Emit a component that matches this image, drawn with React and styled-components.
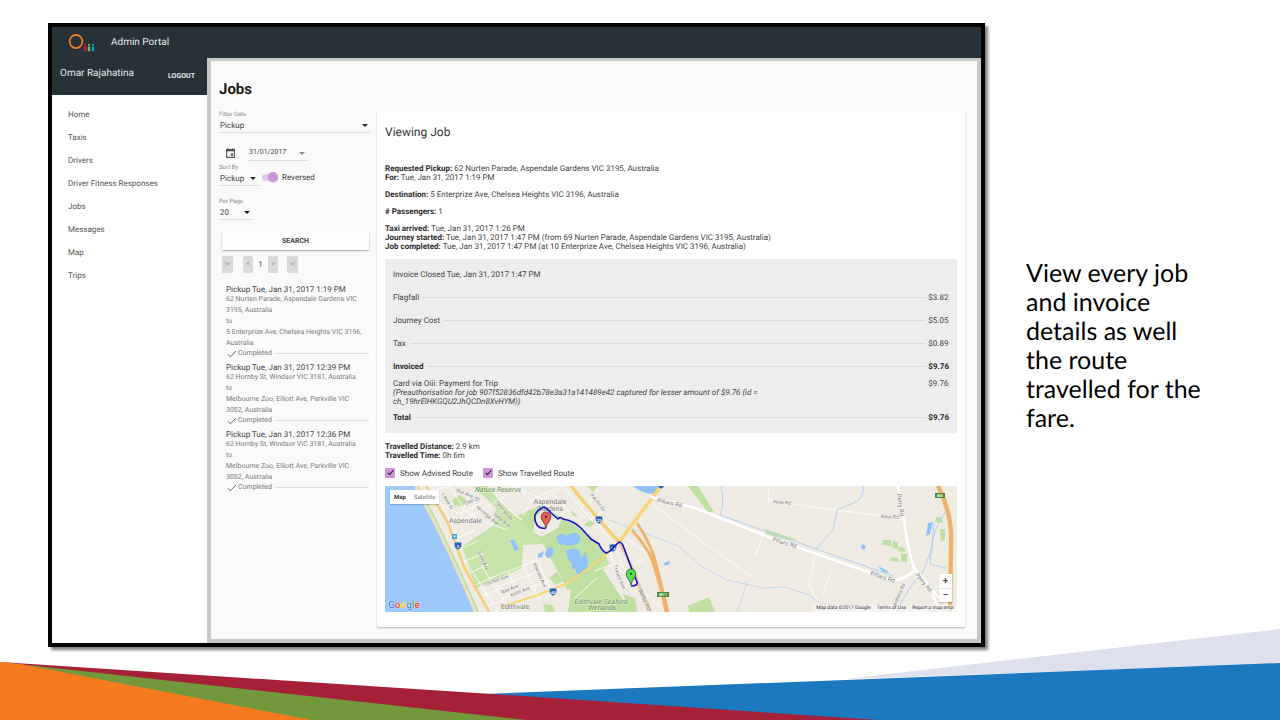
import React from "react";
import styled, { createGlobalStyle, css } from "styled-components";

const GlobalStyle = createGlobalStyle`
  *, *::before, *::after { box-sizing: border-box; }
  body {
    margin: 0;
    background: #fff;
    font-family: Roboto, "Liberation Sans", sans-serif;
    font-size: 8px;
    line-height: 9px;
    color: #444;
    text-rendering: geometricPrecision;
  }
  button, input, select { font: inherit; color: inherit; text-rendering: inherit; margin: 0; padding: 0; border: 0; background: none; }
  p, h1, h2, ul, ol { margin: 0; padding: 0; }
  ul, ol { list-style: none; }
  a { color: inherit; text-decoration: none; }
`;

const Slide = styled.div`
  position: relative;
  min-height: 100vh;
  padding: 23px 64px 73px 48px;
  display: grid;
  grid-template-columns: minmax(0, 1fr) 190px;
  column-gap: 41px;
  overflow: hidden;
`;

const Swoosh = styled.svg`
  position: absolute;
  left: 0;
  bottom: 0;
  width: 100%;
  height: 92px;
`;

const Caption = styled.p`
  align-self: center;
  padding-top: 22px;
  font-family: Lato, "Open Sans", sans-serif;
  font-size: 25px;
  line-height: 29px;
  color: #000;
`;

const Portal = styled.div`
  position: relative;
  z-index: 1;
  border: 4px solid #000;
  background: #fff;
  box-shadow: 3px 3px 3px rgba(0, 0, 0, 0.5);
  display: flex;
  flex-direction: column;
`;

const TopBar = styled.header`
  height: 31px;
  padding-left: 16px;
  display: flex;
  align-items: center;
  gap: 16px;
  background: #263238;
  color: #e4e8ea;
  font-size: 10px;
  line-height: 12px;
`;

const Body = styled.div`
  flex: 1;
  display: grid;
  grid-template-columns: 155px minmax(0, 1fr);
`;

const UserBar = styled.div`
  height: 37px;
  padding: 0 12px 6px 8px;
  display: flex;
  align-items: center;
  justify-content: space-between;
  background: #263238;
  color: #e4e8ea;
  font-size: 10px;
  line-height: 12px;
`;

const Logout = styled.button`
  padding-top: 6px;
  font-size: 7px;
  line-height: 9px;
  font-weight: 700;
`;

const NavList = styled.ul`
  padding: 8px 16px;
`;

const NavLink = styled.a`
  display: block;
  line-height: 23px;
  color: #555;
`;

const Main = styled.main`
  border: solid #c8c8c8;
  border-width: 3px 4px 4px;
  background: #fafafa;
  padding: 20px 12px 12px 8px;
`;

const PageTitle = styled.h1`
  font-size: 15px;
  line-height: 16px;
  font-weight: 700;
  color: #1c1c1c;
`;

const Columns = styled.div`
  margin-top: 15px;
  display: grid;
  grid-template-columns: 152px minmax(0, 1fr);
  column-gap: 6px;
`;

const Field = styled.div`
  position: relative;
  width: ${(p) => p.$width};
`;

const FieldLabel = styled.label`
  display: block;
  font-size: 6px;
  line-height: 6px;
  color: #888;
`;

const underline = css`
  border-bottom: 1px solid #dcdcdc;
`;

const Select = styled.select`
  appearance: none;
  display: block;
  width: 100%;
  height: 15px;
  padding: 1px 1px 0;
  ${underline}
`;

const Arrow = styled.span`
  position: absolute;
  right: 3px;
  bottom: 6px;
  border: 3px solid transparent;
  border-top-color: ${(p) => (p.$muted ? "#888" : "#222")};
  border-bottom: 0;
  pointer-events: none;
`;

const DateRow = styled.div`
  margin-top: 11px;
  padding-left: 6px;
  display: flex;
  align-items: center;
  gap: 11px;
`;

const IconButton = styled.button`
  display: block;
  width: 11px;
  height: 12px;
  svg { display: block; }
`;

const DateInput = styled.input`
  display: block;
  width: 100%;
  height: 17px;
  padding: 0 2px;
  font-size: 7px;
  ${underline}
`;

const SortRow = styled.div`
  margin-top: 4px;
  display: flex;
  align-items: center;
  gap: 3px;
`;

const ToggleLabel = styled.label`
  padding-top: 3px;
  display: flex;
  align-items: center;
  gap: 4px;
`;

const Switch = styled.input`
  appearance: none;
  position: relative;
  width: 16px;
  height: 7px;
  border-radius: 4px;
  background: #e6c8ea;
  &::before {
    content: "";
    position: absolute;
    right: 0;
    top: -2px;
    width: 10px;
    height: 10px;
    border-radius: 5px;
    background: #ce93d8;
    box-shadow: 0 1px 1px rgba(0, 0, 0, 0.15);
  }
`;

const PerPage = styled.div`
  margin-top: 13px;
`;

const SearchButton = styled.button`
  display: block;
  width: 147px;
  height: 18px;
  margin: 12px 0 6px 3px;
  border-radius: 1px;
  background: #fcfcfc;
  box-shadow: 0 1px 2px rgba(0, 0, 0, 0.35);
  font-size: 7px;
  font-weight: 700;
`;

const Pager = styled.nav`
  margin-left: 3px;
  display: flex;
  align-items: center;
`;

const PagerButton = styled.button`
  width: 11px;
  height: 17px;
  border-radius: 1px;
  background: #dadada;
  color: #888;
  font-size: 7px;
  text-align: center;
  &:nth-of-type(2), &:nth-of-type(3) { width: 10px; }
  &:nth-of-type(1) { margin-right: 10px; }
  &:nth-of-type(4) { margin-left: 9px; }
`;

const PagerCurrent = styled.span`
  width: 15px;
  text-align: center;
`;

const JobList = styled.ol`
  margin: 12px 2px 0 7px;
  display: grid;
  gap: 5px;
`;

const JobTitle = styled.a`
  display: block;
`;

const JobAddress = styled.p`
  padding-right: 5px;
  font-size: 7px;
  line-height: 11px;
  color: #7a7a7a;
`;

const JobStatus = styled.div`
  padding-left: 1px;
  display: flex;
  align-items: center;
  gap: 1px;
  font-size: 7px;
  color: #777;
  &::after {
    content: "";
    flex: 1;
    height: 1px;
    margin-left: 2px;
    background: #ddd;
  }
`;

const Card = styled.section`
  background: #fff;
  border-radius: 1px;
  box-shadow: 0 1px 2px rgba(0, 0, 0, 0.28);
  padding: 12px 8px 15px;
`;

const CardTitle = styled.h2`
  margin-bottom: 24px;
  font-size: 12px;
  line-height: 16px;
  font-weight: 400;
  color: #333;
`;

const Para = styled.p`
  margin-bottom: 8px;
  b { color: #2c2c2c; }
`;

const InvoiceBox = styled.div`
  padding: 4px 8px;
  margin-bottom: 9px;
  background: #ededed;
`;

const InvoiceHead = styled.p`
  line-height: 23px;
`;

const InvoiceTable = styled.table`
  width: 100%;
  border-collapse: collapse;
  th, td { padding: 0; text-align: left; font-weight: inherit; }
`;

const Row = styled.tr`
  height: 23px;
  ${(p) => p.$strong && css`font-weight: 700; color: #2c2c2c;`}
`;

const Leader = styled.div`
  display: flex;
  align-items: center;
  gap: 4px;
  &::after {
    content: "";
    flex: 1;
    height: 1px;
    margin-right: 2px;
    background: #dadada;
  }
`;

const Amount = styled.td`
  width: 20px;
`;

const PaymentRow = styled.tr`
  height: 28px;
  vertical-align: bottom;
  td:last-child { vertical-align: top; padding-top: 1px; }
`;

const PaymentNote = styled.div`
  max-width: 380px;
`;

const RouteOptions = styled.div`
  display: flex;
  gap: 10px;
  margin-bottom: 8px;
`;

const CheckLabel = styled.label`
  display: flex;
  align-items: center;
  gap: 5px;
`;

const Checkbox = styled.input`
  appearance: none;
  position: relative;
  width: 10px;
  height: 10px;
  background: #ce93d8;
  border-radius: 1px;
  &::before {
    content: "";
    position: absolute;
    left: 4px;
    top: 1px;
    width: 3px;
    height: 6px;
    border: solid #222;
    border-width: 0 1px 1px 0;
    transform: rotate(42deg);
  }
`;

const MapFrame = styled.div`
  position: relative;
  height: 126px;
  overflow: hidden;
  background: #efebe2;
`;

const MapArt = styled.svg`
  display: block;
  width: 100%;
  height: 100%;
  font-family: Roboto, sans-serif;
`;

const MapTypes = styled.div`
  position: absolute;
  left: 5px;
  top: 4px;
  display: flex;
  height: 14px;
  background: #fff;
  box-shadow: 0 1px 1px rgba(0, 0, 0, 0.2);
`;

const MapType = styled.button`
  padding: 0 4px;
  font-size: 6px;
  color: ${(p) => (p.$active ? "#111" : "#777")};
  font-weight: ${(p) => (p.$active ? 500 : 400)};
`;

const ZoomControls = styled.div`
  position: absolute;
  right: 5px;
  bottom: 10px;
  width: 13px;
  display: grid;
  background: #fff;
  box-shadow: 0 1px 1px rgba(0, 0, 0, 0.2);
`;

const ZoomButton = styled.button`
  height: 14px;
  font-size: 10px;
  font-weight: 700;
  color: #555;
  & + & { border-top: 1px solid #e6e6e6; }
`;

const Credits = styled.div`
  position: absolute;
  right: 0;
  bottom: 0;
  padding: 0 3px;
  display: flex;
  gap: 6px;
  background: rgba(245, 245, 245, 0.75);
  font-size: 5px;
  line-height: 7px;
  color: #333;
`;

const GoogleMark = styled.a`
  position: absolute;
  left: 3px;
  bottom: 0;
  font-size: 10px;
  line-height: 12px;
  font-weight: 500;
  text-shadow: 0 0 1px #fff, 0 0 1px #fff;
`;

const Letter = styled.span`
  color: ${(p) => p.$color};
`;

const NAV = ["Home", "Taxis", "Drivers", "Driver Fitness Responses", "Jobs", "Messages", "Map", "Trips"];

const ZOO = "Melbourne Zoo, Elliott Ave, Parkville VIC 3052, Australia";
const HORNBY = "62 Hornby St, Windsor VIC 3181, Australia";
const JOBS = [
  {
    title: "Pickup Tue, Jan 31, 2017 1:19 PM",
    from: "62 Nurten Parade, Aspendale Gardens VIC 3195, Australia",
    to: "5 Enterprize Ave, Chelsea Heights VIC 3196, Australia",
  },
  { title: "Pickup Tue, Jan 31, 2017 12:39 PM", from: HORNBY, to: ZOO },
  { title: "Pickup Tue, Jan 31, 2017 12:36 PM", from: HORNBY, to: ZOO },
];

const CHARGES = [
  { name: "Flagfall", amount: "$3.82" },
  { name: "Journey Cost", amount: "$5.05" },
  { name: "Tax", amount: "$0.89" },
  { name: "Invoiced", amount: "$9.76", strong: true },
];

const GOOGLE = [["G", "#4285f4"], ["o", "#ea4335"], ["o", "#fbbc05"], ["g", "#4285f4"], ["l", "#34a853"], ["e", "#ea4335"]];

function Logo() {
  return (
    <svg width="27" height="20" viewBox="0 0 27 20" role="img" aria-label="Oiii">
      <ellipse cx="8" cy="8.5" rx="6.4" ry="6.6" fill="none" stroke="#f5821f" strokeWidth="1.7" />
      {[["#d4145a", 17], ["#7ac143", 21], ["#1c8fd6", 25]].map(([c, x]) => (
        <g key={x} fill={c}>
          <circle cx={x} cy="11.8" r="1.1" />
          <path d={`M${x - 1.2} 13.6h2.4v4.6h-2.4z`} />
        </g>
      ))}
    </svg>
  );
}

function CalendarIcon() {
  return (
    <svg width="11" height="12" viewBox="0 0 11 12" fill="none" stroke="#555" aria-hidden="true">
      <path d="M1.6 2.5h7.8v7.9H1.6z" strokeWidth="1.1" />
      <path d="M1.2 3.3h8.6" strokeWidth="2" />
      <path d="M3 1v2M8 1v2" strokeWidth="1" />
      <path d="M5.8 6.4h2.3v2.3H5.8z" fill="#555" stroke="none" />
    </svg>
  );
}

function TickIcon() {
  return (
    <svg width="10" height="9" viewBox="0 0 10 9" fill="none" stroke="#666" aria-hidden="true">
      <path d="M1 5.3l2.4 2.5L9 2" strokeWidth="1" />
    </svg>
  );
}

function SelectField({ id, label, value, width }) {
  return (
    <Field $width={width}>
      <FieldLabel htmlFor={id}>{label}</FieldLabel>
      <Select id={id} defaultValue={value}>
        <option>{value}</option>
      </Select>
      <Arrow />
    </Field>
  );
}

function Shield({ x, y, text }) {
  return (
    <g transform={`translate(${x} ${y})`}>
      <path d="M-3.6-3.4Q0-4.6 3.6-3.4Q4.4 2.4 0 4Q-4.4 2.4-3.6-3.4z" fill="#2a62ad" stroke="#fff" strokeWidth=".4" />
      {text && <text y="1.6" fontSize="4" fontWeight="700" fill="#fff" textAnchor="middle">{text}</text>}
    </g>
  );
}

function Pin({ x, y, color }) {
  return (
    <g transform={`translate(${x} ${y})`}>
      <path d="M0 0C-.8-5-4.8-7-4.8-11.3a4.8 4.8 0 019.6 0C4.8-7 .8-5 0 0z" fill={color} stroke="#222" strokeWidth=".6" />
      <circle cy="-11.3" r="1" fill="#111" />
    </g>
  );
}

const LABELS = [
  ["Laura St", 57, 8, 62, 5], ["dus Ave", 71, 5, 24, 5], ["Glen St", 80, 19, -20, 5],
  ["Nirringa Ave", 91, 22, 40, 5], ["Iluka Ave", 108, 29, 38, 5], ["Tarongo Dr", 110, 16, 50, 5],
  ["Sixth Ave", 92, 66, 64, 5], ["Lochiel Ave", 100, 100, -19, 5], ["Rae Ave", 117, 108, -22, 5],
  ["Keith Ave", 126, 111, -22, 5], ["Kinross Ave", 148, 78, 66, 5], ["Pacific Dr", 205, 9, 52, 5],
  ["Thrope Ave", 228, 80, 68, 5], ["Wells Rd", 253, 104, 66, 6], ["Pillars Rd", 272, 16, 12, 6],
  ["Keys Rd", 388, 17, 6, 5], ["Keys Rd", 496, 32, 3, 5], ["Pillars Rd", 387, 55, 17, 6],
  ["Pillars Rd", 485, 89, 18, 6], ["Perry Rd", 512, 8, 82, 6], ["Perry Rd", 530, 89, 50, 6],
  ["Stephens Rd", 509, 124, -66, 5],
];

function RouteMap() {
  return (
    <MapArt viewBox="0 0 573 126" preserveAspectRatio="xMinYMid slice" role="img" aria-label="Route map">
      <path d="M0 0h573v126H0z" fill="#efebe2" />
      <path d="M0 0H31Q41 19 50 36L68 74Q81 102 91 126H0z" fill="#9ec9fc" />
      <path d="M31 0Q41 19 50 36L68 74Q81 102 91 126" fill="none" stroke="#e7e3c0" strokeWidth="4" />
      <path d="M33 0Q43 19 52 36L70 74Q83 102 93 126" fill="none" stroke="#b9dc98" strokeWidth="1.4" />
      <g fill="#bfe0a2">
        <path d="M88 0h15q16 20 31 33l7-8 18-5 18 15 11 3 14 16 15 10 8 14-24 20-15 4-14-17-14-27-20 1-1 23-46 20-15-41 33-22L111 22z" fill="#c6e3aa" />
        <path d="M132 30l25-11 24 16 10 4 23 21 8 12-28 30-12 2-20-44z" />
        <path d="M186 102l31-20 9 14 10 15 15 15h-68z" />
        <path d="M67 14l8-5 7 5-3 6-9 0zM185 24l8 6-5 1zM164 92l8-6 6 9-7 4zM158 118l9 1 3 7h-10zM247 0zM202 0l11 0-5 6zM238 108l12 4 2 14-9-4zM303 0h10l16 26h-6zM303 120l21-9 6 15h-26z" />
        <path d="M380 43l33 11-10 0-22-6zM498 54l8 0 0 6-9-1zM508 55l5 1 0 7-6-1zM514 61l6 1 0 4-7-1zM506 71l7 1 1 4-9-1zM516 68l6 0 0 8-6 0zM551 31l6 0 1 6-8-1zM555 43l5 0 0 12-4 0zM199 39l6-5 5 3-5 4z" />
      </g>
      <path d="M151 31l8-9 17 12-3 8-17 9-8-5z" fill="#efebe2" />
      <g fill="#8fc1fa">
        <path d="M172 50q6-4 9 0 8-6 13-1 3 6-2 9-9 3-13 0-7 3-7-8zM160 68q2-8 7-7 4 5 0 9-5 5-7-2zM181 65q10-5 14 1 2 10-3 16-6 4-5-5-5-3-6-12zM190 82l10-16 3 10-2 10-8 5zM125 54l4 0 5 9-4 2zM153 68l6-3-2 6-4 1zM248 0h26l-5 8q-12 0-21-8zM279 77l6-2-1 3-4 2zM477 58l4 2-2 4-3-2zM493 80l8 4 3 3-6-1zM543 37l5-1-3 12-4 2z" />
      </g>
      <g fill="none" stroke="#fff" strokeWidth="1" strokeOpacity=".8">
        <path d="M46 0L66 36 84 80 113 126M42 12L53 3 66 0M72 38L122 9M80 50l10-6M64 0l18 26 17 10 24 8M50 14l24 14 24-12M92 0l-10 12-8 26M134 0l12 16-8 14M128 0l30 14 20-14M146 14l26-12M178 0l30 36M168 8l22 24M186 0l36 50M195 22l16-10M205 34l14-10M216 46l12-8M68 54l21-10M73 64l20-9M78 76l20-8M82 88l21-9M88 100l22-10M93 112l24-10M99 122l20-8M96 79l30 47M108 91l44-17M112 101l46-17M118 112l46-17M152 74l16 34M138 79l16 34M124 86l15 32M190 112l22-20M210 85l15-6 14 8M224 64l12 34M230 62l14 32M241 52l22 16M250 78l12-6M254 100l22 22M270 20l48 36 48 34M384 0l-1 14 66 10 67 8M378 50l-8 20M430 70l-6 28 12 26M446 84l-8 24" />
        <path d="M104 0q15 22 33 34" strokeWidth="1.3" />
      </g>
      <g fill="none" stroke="#b4d0ee" strokeWidth="1">
        <path d="M336 0q4 16-1 29l51 18 122 43M478 0q2 14-12 18l-14 6-4 20-18 20M563 22q-16 22-16 40l-10 26q-14 12-25 38M549 38l-4 40 16 4" />
        <path d="M224 34l70 26 22 20 26 14 36 8 22-1 24 8 20 15M362 96l-10 30" strokeWidth=".7" />
      </g>
      <g fill="none">
        <path d="M41 0L63 37 79 81 104 126" stroke="#f3cf7c" strokeWidth="2.6" />
        <path d="M116 121L153 109 183 97 219 71 234 56" stroke="#f8d675" strokeWidth="2" />
        <path d="M234 56L276 0" stroke="#f8d675" strokeWidth="3.4" />
        <path d="M186 0q22 28 48 56" stroke="#f5cf75" strokeWidth="3.4" />
        <path d="M234 56q12 20 20 44l12 26" stroke="#f2c795" strokeWidth="3" />
        <path d="M252 37q16 24 20 45l11 44M247 44q13 15 19 27 10 28 15 55" stroke="#efb26c" strokeWidth="3" />
        <path d="M266 11L310 22 386 52 506 94Q520 95 531 83" stroke="#fff" strokeWidth="2.6" />
        <path d="M513 0L519 34Q523 64 529 82L556 114 573 124M547 108l9 18" stroke="#fff" strokeWidth="2.6" />
        <path d="M553 0Q568 30 566 60L565 126" stroke="#efb26c" strokeWidth="4.4" />
      </g>
      <g fill="#777" stroke="#fff" strokeWidth="1" paintOrder="stroke" strokeOpacity=".6">
        {LABELS.map(([text, x, y, angle, size], i) => (
          <text key={i} fontSize={size} transform={`translate(${x} ${y}) rotate(${angle})`}>{text}</text>
        ))}
        <text x="64" y="37" fontSize="7">Aspendale</text>
        <text x="165" y="18" fontSize="7" textAnchor="middle">Aspendale</text>
        <text x="165" y="25" fontSize="7" textAnchor="middle">Gardens</text>
        <text x="116" y="123" fontSize="7">Edithvale</text>
        <g fill="#5c8a4a" fontStyle="italic" fontSize="7">
          <text x="90" y="6">Nature Reserve</text>
          <text x="216" y="118" textAnchor="middle">Edithvale-Seaford</text>
          <text x="217" y="124" textAnchor="middle">Wetlands</text>
        </g>
      </g>
      <Shield x="73" y="60" text="3" />
      <Shield x="168" y="106" text="40" />
      <Shield x="214" y="34" text="23" />
      <Shield x="228" y="62" text="33" />
      <Shield x="276" y="-1" />
      <path d="M67 48h5v5h-5z" fill="#3aa0dc" />
      <path d="M68.500 49.500h2v2h-2z" fill="#fff" />
      <g fontSize="4" fontWeight="700" textAnchor="middle">
        <path d="M272 106h12v5h-12zM550 7h10v5h-10z" fill="#4c8b3c" />
        <text x="278" y="110" fill="#fff">M11</text>
        <text x="555" y="11" fill="#fff">M3</text>
      </g>
      <path
        d="M161 42Q155 43 152 39Q149 34 150 29Q153 23 159 21Q163 23 166 27L173 33Q175 30 178 33Q189 35 196 42L206 53L214 58Q217 65 221 67Q225 66 228 62L234 56Q237 56 239 62L246 81L252 96Q253 100 246 100"
        fill="none" stroke="#1010c8" strokeWidth="1.600" strokeLinejoin="round"
      />
      <Pin x={161} y={42} color="#ea5f54" />
      <Pin x={246} y={99} color="#52e052" />
    </MapArt>
  );
}

function Filters() {
  return (
    <form onSubmit={(e) => e.preventDefault()}>
      <SelectField id="filter-date" label="Filter Date" value="Pickup" width="152px" />
      <DateRow>
        <IconButton type="button" aria-label="Open calendar"><CalendarIcon /></IconButton>
        <Field $width="61px">
          <DateInput aria-label="Date" defaultValue="31/01/2017" />
          <Arrow $muted />
        </Field>
      </DateRow>
      <SortRow>
        <SelectField id="sort-by" label="Sort By" value="Pickup" width="40px" />
        <ToggleLabel>
          <Switch type="checkbox" role="switch" defaultChecked />
          Reversed
        </ToggleLabel>
      </SortRow>
      <PerPage>
        <SelectField id="per-page" label="Per Page" value="20" width="34px" />
      </PerPage>
      <SearchButton type="submit">SEARCH</SearchButton>
    </form>
  );
}

export default function App() {
  return (
    <Slide>
      <GlobalStyle />
      <Swoosh viewBox="0 0 1280 92" preserveAspectRatio="none" aria-hidden="true">
        <path d="M845 51L1280 1V36z" fill="#dfe0ee" />
        <path d="M484 66L1280 35V92H484z" fill="#1c79c0" />
        <path d="M0 34L484 65.500 879 92H0z" fill="#a52138" />
        <path d="M0 34L527 92H0z" fill="#73983c" />
        <path d="M0 34L20 36 312 92H0z" fill="#f67b20" />
      </Swoosh>
      <Portal>
        <TopBar>
          <Logo />
          <span>Admin Portal</span>
        </TopBar>
        <Body>
          <aside>
            <UserBar>
              <span>Omar Rajahatina</span>
              <Logout>LOGOUT</Logout>
            </UserBar>
            <nav>
              <NavList>
                {NAV.map((n) => (
                  <li key={n}><NavLink href="#">{n}</NavLink></li>
                ))}
              </NavList>
            </nav>
          </aside>
          <Main>
            <PageTitle>Jobs</PageTitle>
            <Columns>
              <div>
                <Filters />
                <Pager aria-label="Pages">
                  <PagerButton>|&lt;</PagerButton>
                  <PagerButton>&lt;</PagerButton>
                  <PagerCurrent>1</PagerCurrent>
                  <PagerButton>&gt;</PagerButton>
                  <PagerButton>&gt;|</PagerButton>
                </Pager>
                <JobList>
                  {JOBS.map((j) => (
                    <li key={j.title}>
                      <JobTitle href="#">{j.title}</JobTitle>
                      <JobAddress>{j.from}</JobAddress>
                      <JobAddress>to</JobAddress>
                      <JobAddress>{j.to}</JobAddress>
                      <JobStatus><TickIcon />Completed</JobStatus>
                    </li>
                  ))}
                </JobList>
              </div>
              <Card>
                <CardTitle>Viewing Job</CardTitle>
                <Para>
                  <b>Requested Pickup:</b> 62 Nurten Parade, Aspendale Gardens VIC 3195, Australia<br />
                  <b>For:</b> Tue, Jan 31, 2017 1:19 PM
                </Para>
                <Para><b>Destination:</b> 5 Enterprize Ave, Chelsea Heights VIC 3196, Australia</Para>
                <Para><b># Passengers:</b> 1</Para>
                <Para>
                  <b>Taxi arrived:</b> Tue, Jan 31, 2017 1:26 PM<br />
                  <b>Journey started:</b> Tue, Jan 31, 2017 1:47 PM (from 69 Nurten Parade, Aspendale Gardens VIC 3195, Australia)<br />
                  <b>Job completed:</b> Tue, Jan 31, 2017 1:47 PM (at 10 Enterprize Ave, Chelsea Heights VIC 3196, Australia)
                </Para>
                <InvoiceBox>
                  <InvoiceHead>Invoice Closed Tue, Jan 31, 2017 1:47 PM</InvoiceHead>
                  <InvoiceTable>
                    <tbody>
                      {CHARGES.map((c) => (
                        <Row key={c.name} $strong={c.strong}>
                          <th scope="row"><Leader>{c.name}</Leader></th>
                          <Amount>{c.amount}</Amount>
                        </Row>
                      ))}
                      <PaymentRow>
                        <th scope="row">
                          Card via Oiii: Payment for Trip
                          <PaymentNote>
                            <em>(Preauthorisation for job 907f52836dfd42b78e3a31a141489e42 captured for lesser amount of $9.76 (id = ch_19hrElHKGQU2JhQCDn8XvHYM))</em>
                          </PaymentNote>
                        </th>
                        <Amount>$9.76</Amount>
                      </PaymentRow>
                      <Row $strong>
                        <th scope="row"><Leader>Total</Leader></th>
                        <Amount>$9.76</Amount>
                      </Row>
                    </tbody>
                  </InvoiceTable>
                </InvoiceBox>
                <Para>
                  <b>Travelled Distance:</b> 2.9 km<br />
                  <b>Travelled Time:</b> 0h 6m
                </Para>
                <RouteOptions>
                  <CheckLabel><Checkbox type="checkbox" defaultChecked />Show Advised Route</CheckLabel>
                  <CheckLabel><Checkbox type="checkbox" defaultChecked />Show Travelled Route</CheckLabel>
                </RouteOptions>
                <MapFrame>
                  <RouteMap />
                  <MapTypes>
                    <MapType $active>Map</MapType>
                    <MapType>Satellite</MapType>
                  </MapTypes>
                  <ZoomControls>
                    <ZoomButton aria-label="Zoom in">+</ZoomButton>
                    <ZoomButton aria-label="Zoom out">−</ZoomButton>
                  </ZoomControls>
                  <GoogleMark href="#">
                    {GOOGLE.map(([ch, color], i) => <Letter key={i} $color={color}>{ch}</Letter>)}
                  </GoogleMark>
                  <Credits>
                    <span>Map data ©2017 Google</span>
                    <a href="#">Terms of Use</a>
                    <a href="#">Report a map error</a>
                  </Credits>
                </MapFrame>
              </Card>
            </Columns>
          </Main>
        </Body>
      </Portal>
      <Caption>View every job and invoice details as well the route travelled for the fare.</Caption>
    </Slide>
  );
}
